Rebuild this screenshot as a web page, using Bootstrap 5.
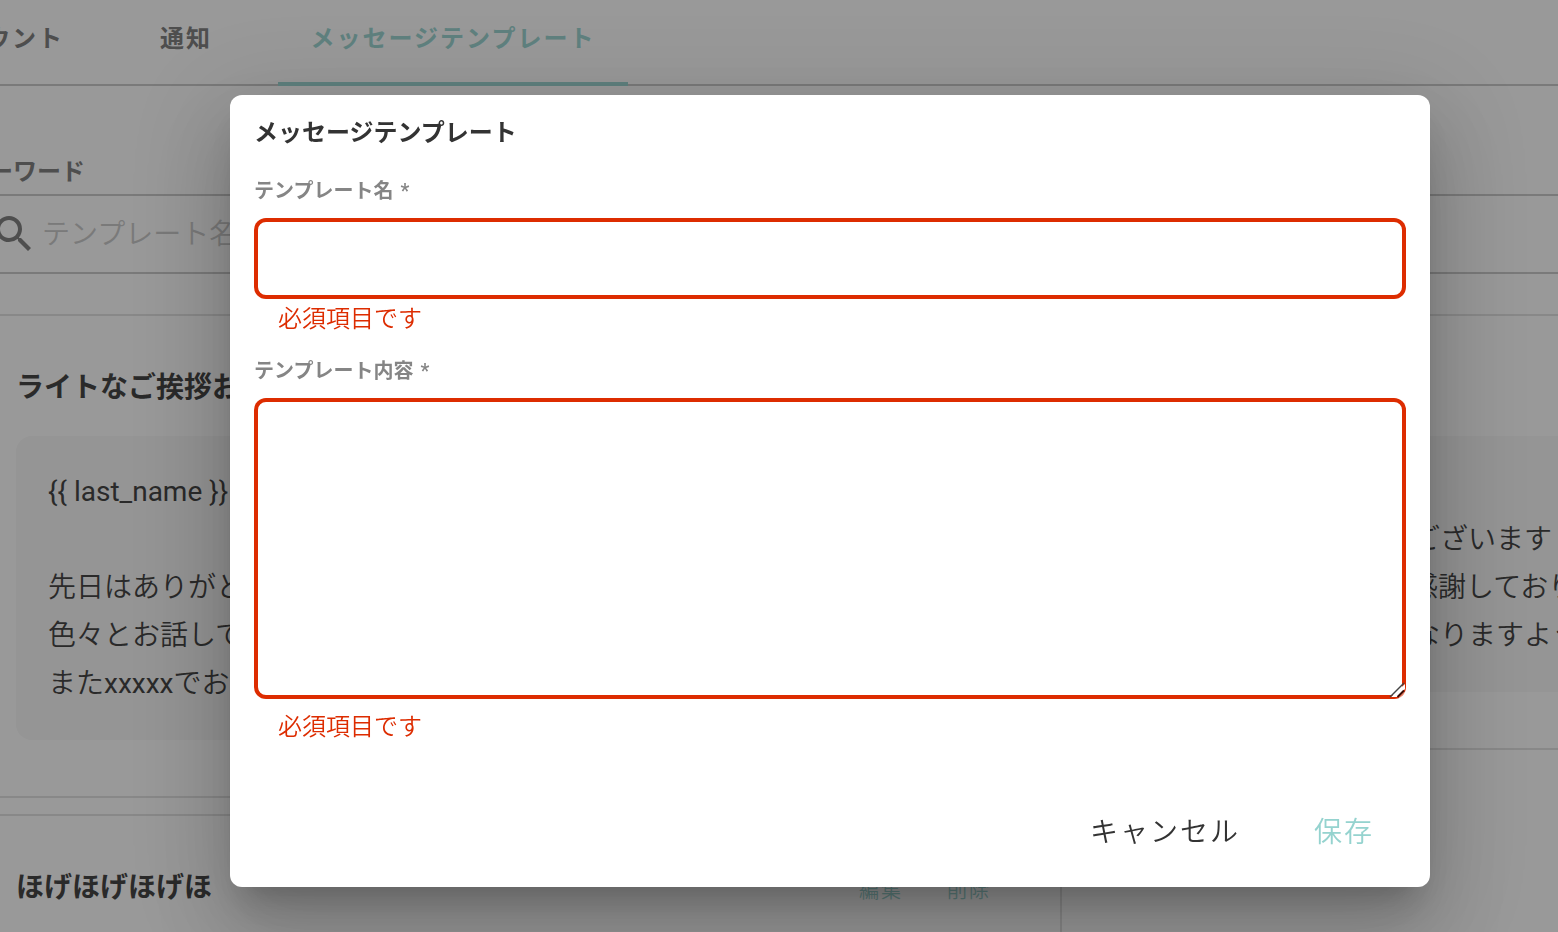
<!DOCTYPE html>
<html lang="ja">
<head>
<meta charset="utf-8">
<meta name="viewport" content="width=device-width, initial-scale=1">
<title>メッセージテンプレート</title>
<link href="https://cdn.jsdelivr.net/npm/bootstrap@5.3.0/dist/css/bootstrap.min.css" rel="stylesheet">
<style>
  :root { --teal: #95d3cf; --ink: #333; --muted: #757575; --danger: #dd2c00; }
  body { font-family: Roboto, "Noto Sans CJK JP", sans-serif; color: var(--ink); overflow: hidden; background: #fff; }
  .page { height: 100vh; overflow: hidden; }

  /* tab bar, scrolled to its end */
  .tabs { margin-left: -98px; border-bottom: 2px solid #c6c6c6; }
  .tabs .nav-link { min-width: 180px; padding: 22px 32px 26px; margin-bottom: -2px; border-bottom: 4px solid transparent; font-size: 24px; line-height: 34px; letter-spacing: 2px; font-weight: 700; color: var(--muted); text-align: center; white-space: nowrap; }
  .tabs .nav-link.active { min-width: 350px; margin-left: 2px; color: var(--teal); border-color: var(--teal); }

  .search { margin: 70px 0 0 -35px; }
  .search label { font-size: 24px; line-height: 32px; font-weight: 700; color: var(--muted); }
  .search-box { height: 80px; margin-top: 6px; padding-left: 25px; border: solid #c6c6c6; border-width: 2px 0; }
  .search-box input { font-size: 28px; line-height: 40px; font-weight: 350; padding: 2px 4px 0; }
  .search-box input::placeholder { color: #c6c6c6; opacity: 1; }

  .templates { width: 2224px; margin: 40px 0 0 -42px; column-gap: 16px; row-gap: 16px; display: grid; grid-template-columns: 1104px 1104px; align-items: start; }
  .tpl { border: 2px solid #e0e0e0; padding: 52px 56px 56px; }
  .tpl h2 { font-size: 28px; line-height: 40px; font-weight: 700; }
  .tpl pre { margin: 28px 0 0; padding: 32px; border-radius: 16px; background: #f7f7f7; font: 350 28px/48px Roboto, "Noto Sans CJK JP", sans-serif; color: var(--ink); }
  .tpl pre span { font-weight: 400; }
  .tpl.flush { padding-left: 48px; }
  .tpl .btn { font-size: 20px; line-height: 28px; letter-spacing: 2px; font-weight: 350; color: var(--teal); padding: 0; border: 0; }
  .tpl .actions { gap: 44px; margin-right: 13px; padding-top: 6px; }

  .modal-backdrop { --bs-backdrop-bg: #212121; --bs-backdrop-opacity: .46; }
  .modal { padding-left: 102px; overflow: hidden; }
  .modal-dialog { max-width: 1200px; margin-top: 95px; }
  .modal-content { border: 0; border-radius: 12px; padding: 20px 24px 30px; color: var(--ink);
    box-shadow: 0 22px 30px -14px rgba(0,0,0,.2), 0 48px 76px 6px rgba(0,0,0,.14), 0 18px 92px 16px rgba(0,0,0,.12); }
  .modal-title { font-size: 24px; line-height: 36px; font-weight: 700; }
  .field { margin-top: 28px; }
  .field label { display: block; font-size: 20px; line-height: 24px; font-weight: 700; color: #858585; margin-bottom: 15px; }
  .field label span { font-weight: 500; margin-left: 2px; }
  .field .form-control { border: 0; border-radius: 12px; height: 81px; padding: 16px 24px; font-size: 28px; box-shadow: inset 0 0 0 4px var(--danger); background: #fff; }
  .field textarea.form-control { height: 301px; resize: none; }
  .grip { right: 0; bottom: 0; }
  .field .error { margin-left: 24px; padding-top: 8px; font-size: 24px; line-height: 24px; font-weight: 350; color: var(--danger); }
  .field .error.roomy { padding-top: 16px; }
  .modal-buttons { margin-top: 70px; gap: 74px; padding-right: 32px; }
  .modal-buttons .btn { font-size: 28px; line-height: 48px; letter-spacing: 2px; font-weight: 350; padding: 0; border: 0; color: var(--ink); }
  .modal-buttons .btn.save { color: var(--teal); }
</style>
</head>
<body>
<div class="page">
  <nav class="tabs nav flex-nowrap">
    <a class="nav-link" href="#">アカウント</a>
    <a class="nav-link" href="#">通知</a>
    <a class="nav-link active" href="#" aria-current="page">メッセージテンプレート</a>
  </nav>

  <div class="search">
    <label for="keyword">キーワード</label>
    <div class="search-box d-flex align-items-center">
      <svg class="flex-shrink-0" width="48" height="48" viewBox="0 0 24 24" fill="#757575" aria-hidden="true"><path d="M9.500 3A6.500 6.500 0 0 1 16 9.500c0 1.610-.590 3.090-1.560 4.230l.270.270h.790l5 5-1.500 1.500-5-5v-.790l-.270-.270A6.516 6.516 0 0 1 9.500 16 6.500 6.500 0 0 1 3 9.500 6.500 6.500 0 0 1 9.500 3m0 2C7 5 5 7 5 9.500S7 14 9.500 14 14 12 14 9.500 12 5 9.500 5z"/></svg>
      <input id="keyword" class="form-control border-0 shadow-none bg-transparent" type="text" placeholder="テンプレート名">
    </div>
  </div>

  <main class="templates">
    <article class="tpl">
      <h2 class="mb-0">ライトなご挨拶お礼</h2>
      <pre><span>{{ last_name }}</span> 様

先日はありがとうございました
色々とお話しできて嬉しかったです
また<span>xxxxx</span>でお会いしましょう</pre>
    </article>
    <article class="tpl flush">
      <h2 class="mb-0">お礼</h2>
      <pre><span>{{ last_name }}</span> 様
本日は、ありがとうございます
お時間をいただき、感謝しております
今後とも良いご縁になりますように</pre>
    </article>
    <article class="tpl">
      <div class="d-flex justify-content-between">
        <h2 class="mb-0">ほげほげほげほ</h2>
        <div class="actions d-flex">
          <button class="btn" type="button">編集</button>
          <button class="btn" type="button">削除</button>
        </div>
      </div>
      <pre>ほげほげ</pre>
    </article>
  </main>
</div>

<div class="modal-backdrop show"></div>
<div class="modal d-block" role="dialog" aria-modal="true" aria-labelledby="dialogTitle">
  <div class="modal-dialog">
    <form class="modal-content" novalidate>
      <h1 class="modal-title mb-0" id="dialogTitle">メッセージテンプレート</h1>
      <div class="field">
        <label for="tplName">テンプレート名 <span>*</span></label>
        <input id="tplName" class="form-control" type="text" required aria-describedby="nameError">
        <div class="error" id="nameError">必須項目です</div>
      </div>
      <div class="field">
        <label for="tplBody">テンプレート内容 <span>*</span></label>
        <div class="position-relative">
          <textarea id="tplBody" class="form-control" required aria-describedby="bodyError"></textarea>
          <svg class="grip position-absolute" width="18" height="18" viewBox="0 0 18 18" fill="none" aria-hidden="true">
            <path d="M3 16 17 3V8L9 16Z" fill="#fff"/>
            <path d="M2 16 16 2" stroke="#444" stroke-width="1.500"/>
            <path d="M10 16 16 10" stroke="#fff" stroke-opacity=".400" stroke-width="4"/>
            <path d="M9.500 16 16 9.500" stroke="#3a0c04" stroke-width="2"/>
          </svg>
        </div>
        <div class="error roomy" id="bodyError">必須項目です</div>
      </div>
      <div class="modal-buttons d-flex justify-content-end">
        <button class="btn" type="button">キャンセル</button>
        <button class="btn save" type="submit">保存</button>
      </div>
    </form>
  </div>
</div>
<script src="https://cdn.jsdelivr.net/npm/bootstrap@5.3.0/dist/js/bootstrap.bundle.min.js"></script>
</body>
</html>
